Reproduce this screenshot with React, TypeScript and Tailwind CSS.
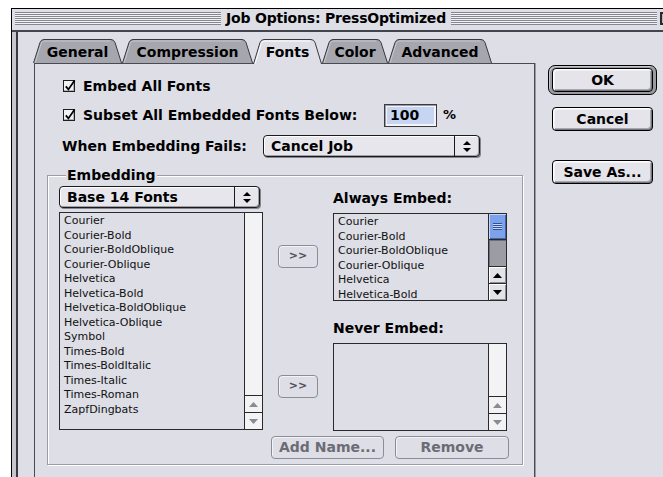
import React from "react";

const SANS = "font-['DejaVu_Sans',sans-serif]";

type TabDef = { label: string; w: number; cls: string; active?: boolean };

const TABS: TabDef[] = [
  { label: "General", w: 89, cls: "w-[89px]" },
  { label: "Compression", w: 131, cls: "w-[131px]" },
  { label: "Fonts", w: 69, cls: "w-[69px]", active: true },
  { label: "Color", w: 66, cls: "w-[66px]" },
  { label: "Advanced", w: 104, cls: "w-[104px]" },
];

const ALL_FONTS = [
  "Courier",
  "Courier-Bold",
  "Courier-BoldOblique",
  "Courier-Oblique",
  "Helvetica",
  "Helvetica-Bold",
  "Helvetica-BoldOblique",
  "Helvetica-Oblique",
  "Symbol",
  "Times-Bold",
  "Times-BoldItalic",
  "Times-Italic",
  "Times-Roman",
  "ZapfDingbats",
];

const ALWAYS = [
  "Courier",
  "Courier-Bold",
  "Courier-BoldOblique",
  "Courier-Oblique",
  "Helvetica",
  "Helvetica-Bold",
];

function Tab({ t }: { t: TabDef }) {
  const w = t.w;
  const h = t.active ? 26 : 25;
  const edge = `M0.5 ${h} L7 4.5 Q8.2 1.5 11 1.5 L${w - 11} 1.5 Q${w - 8.2} 1.5 ${w - 7} 4.5 L${w - 0.5} ${h}`;
  return (
    <div className={`relative h-[25px] ${t.cls} ${t.active ? "z-20" : "z-10"}`}>
      <svg className="absolute left-0 top-0 overflow-visible" width={w} height={h}>
        <path d={edge + " Z"} fill={t.active ? "#dedee6" : "#a6a6ae"} />
        <path
          d={`M2 ${h} L8.3 5.2 Q9.3 3 11.5 3 L${w - 12} 3`}
          fill="none"
          stroke={t.active ? "#ffffff" : "#c6c6ce"}
        />
        <path d={edge} fill="none" stroke="#38383e" />
      </svg>
      <span className="relative flex h-full items-center justify-center pt-[4px] text-[14px] font-bold text-black">
        {t.label}
      </span>
    </div>
  );
}

function Checkbox() {
  return (
    <div className="relative h-[12px] w-[12px] shrink-0 border border-[#1e1e1e] bg-[#f2f2f6] shadow-[inset_-1px_-1px_0_#b0b0b8]">
      <svg className="absolute -left-px -top-[2px] overflow-visible" width="14" height="14" viewBox="0 0 14 14">
        <path d="M2.8 7.4 L5.4 10.4 L11.6 1.6" fill="none" stroke="#000" strokeWidth="1.8" />
      </svg>
    </div>
  );
}

function Tri({ up, color }: { up?: boolean; color: string }) {
  return (
    <svg width="9" height="5" viewBox="0 0 9 5">
      <path d={up ? "M0 5 L4.5 0 L9 5 Z" : "M0 0 L4.5 5 L9 0 Z"} fill={color} />
    </svg>
  );
}

function Popup({ label, cls }: { label: string; cls: string }) {
  return (
    <div
      className={`flex h-[22px] shrink-0 ${cls} rounded-[4px] border border-[#1a1a1a] bg-[#e6e6ec] shadow-[inset_1px_1px_0_#fff,inset_-1px_-1px_0_#a0a0a8,1px_1px_0_#84848c]`}
    >
      <span className="flex-1 pl-[7px] text-[14px] font-bold leading-[20px] text-black">{label}</span>
      <span className="flex w-[25px] flex-col items-center justify-center gap-[2px] border-l border-[#1a1a1a]">
        <svg width="8" height="11" viewBox="0 0 8 11">
          <path d="M0 4 L4 0 L8 4 Z M0 7 L4 11 L8 7 Z" fill="#000" />
        </svg>
      </span>
    </div>
  );
}

const PUSH =
  "flex items-center justify-center rounded-[4px] border border-black bg-[#e4e4ea] text-[14px] font-bold text-black shadow-[inset_1px_1px_0_#fff,inset_2px_2px_0_#f2f2f6,inset_-1px_-1px_0_#74747c,inset_-2px_-2px_0_#a8a8b0]";

const DIM =
  "flex items-center justify-center rounded-[4px] border border-[#8c8c94] bg-[#dedee6] shadow-[inset_1px_1px_0_#f4f4f8]";

function ArrowBox({ up, active }: { up?: boolean; active?: boolean }) {
  return (
    <div
      className={`flex h-[17px] items-center justify-center border-t border-[#2a2a2a] ${
        active ? "bg-[#e2e2e8] shadow-[inset_1px_1px_0_#fff,inset_-1px_-1px_0_#8c8c94]" : "bg-[#f3f3f6]"
      }`}
    >
      <Tri up={up} color={active ? "#000" : "#8a8a92"} />
    </div>
  );
}

function Rows({ items }: { items: string[] }) {
  return (
    <div className="flex-1 overflow-hidden pl-[4px] pt-[1px] text-[11px] leading-[14.5px] text-[#111]">
      {items.map((f) => (
        <div key={f} className="h-[14.5px] whitespace-nowrap">
          {f}
        </div>
      ))}
    </div>
  );
}

function IdleBar() {
  return (
    <div className="flex w-[18px] flex-col border-l border-[#2a2a2a] bg-[#f3f3f6]">
      <div className="flex-1" />
      <ArrowBox up />
      <ArrowBox />
    </div>
  );
}

function LiveBar() {
  return (
    <div className="flex w-[18px] flex-col border-l border-[#2a2a2a]">
      <div className="flex h-[26px] items-center justify-center border-b border-[#2a2a2a] bg-[#7ea2ea] shadow-[inset_1px_1px_0_#c4d6fa,inset_-1px_-1px_0_#3f62b4]">
        <div className="h-[7px] w-[9px] bg-[repeating-linear-gradient(to_bottom,#2e4f9e_0_1px,#c8d8fa_1px_2px)]" />
      </div>
      <div className="flex-1 bg-[#9c9ca4] shadow-[inset_1px_1px_0_#6e6e76]" />
      <ArrowBox up active />
      <ArrowBox active />
    </div>
  );
}

export default function App() {
  return (
    <div className={`h-[477px] w-[663px] overflow-hidden bg-white pl-[11px] pt-[8px] ${SANS}`}>
      <div className="flex h-[520px] w-[680px] flex-col border-l border-t border-black bg-[#dedee6]">
        {/* title bar */}
        <div className="flex h-[23px] shrink-0 items-start border-b-2 border-[#44444c] pl-[3px] pr-[17px] pt-[3px]">
          <div className="h-[13px] flex-1 bg-[repeating-linear-gradient(to_bottom,#86868e_0_1px,#f2f2f6_1px_2px)]" />
          <span className="px-[5px] text-[14px] font-bold leading-[13px] tracking-[-0.2px] text-black">
            Job Options: PressOptimized
          </span>
          <div className="h-[13px] flex-1 bg-[repeating-linear-gradient(to_bottom,#86868e_0_1px,#f2f2f6_1px_2px)]" />
          <div className="ml-[3px] h-[13px] w-[14px] border-2 border-[#2a2a2a] bg-[#b8b8c0]" />
        </div>

        {/* body */}
        <div className="flex flex-1">
          <div className="w-[4px] bg-[#c6c6ce]" />
          <div className="w-[2px] bg-[#3a3a42]" />

          {/* tabs + panel */}
          <div className="flex flex-col pl-[16px] pt-[6px]">
            <div className="relative z-10 -ml-px flex h-[25px]">
              {TABS.map((t) => (
                <Tab key={t.label} t={t} />
              ))}
            </div>

            <div className="flex h-[440px] w-[501px] flex-col border border-[#4a4a52] shadow-[1px_0_0_#9a9aa2]">
              {/* Embed All Fonts */}
              <div className="ml-[28px] mt-[14px] flex h-[16px] items-center">
                <Checkbox />
                <span className="ml-[8px] text-[14px] font-bold leading-[16px] text-black">Embed All Fonts</span>
              </div>

              {/* Subset row */}
              <div className="ml-[28px] mt-[9px] flex h-[24px] items-center">
                <Checkbox />
                <span className="ml-[8px] w-[301px] text-[14px] font-bold leading-[16px] text-black">
                  Subset All Embedded Fonts Below:
                </span>
                <div className="flex h-[23px] w-[53px] items-center border border-[#3a3a42] bg-[#f4f4f8] p-[2px] shadow-[inset_1px_1px_0_#9a9aa2]">
                  <div className="flex h-full w-full items-center bg-[#c6d5f2] pl-[3px] text-[14px] font-bold text-black">
                    100
                  </div>
                </div>
                <span className="ml-[6px] text-[13px] font-bold text-black">%</span>
              </div>

              {/* failure policy */}
              <div className="ml-[27px] mt-[8px] flex h-[22px] items-center">
                <span className="w-[201px] text-[14px] font-bold leading-[16px] text-black">When Embedding Fails:</span>
                <Popup label="Cancel Job" cls="w-[217px]" />
              </div>

              {/* Embedding group */}
              <div className="relative ml-[12px] mt-[18px] w-[476px] border border-[#9c9ca4] shadow-[1px_1px_0_#fff,inset_1px_1px_0_#fff]">
                <span className="absolute -top-[9px] left-[18px] bg-[#dedee6] px-[1px] text-[14px] font-bold leading-[16px] text-black">
                  Embedding
                </span>

                <div className="flex pl-[11px]">
                  {/* source list */}
                  <div className="flex w-[204px] flex-col">
                    <div className="mt-[10px]">
                      <Popup label="Base 14 Fonts" cls="w-[201px]" />
                    </div>
                    <div className="mt-[4px] flex h-[218px] border border-[#2a2a2a]">
                      <Rows items={ALL_FONTS} />
                      <IdleBar />
                    </div>
                  </div>

                  {/* move buttons */}
                  <div className="ml-[15px] flex w-[40px] flex-col">
                    <div className={`${DIM} mt-[69px] h-[23px] text-[11px] font-bold text-[#50505a]`}>&gt;&gt;</div>
                    <div className={`${DIM} mt-[107px] h-[23px] text-[11px] font-bold text-[#50505a]`}>&gt;&gt;</div>
                  </div>

                  {/* target lists */}
                  <div className="ml-[15px] flex w-[174px] flex-col">
                    <div className="mt-[14px] h-[16px] text-[14px] font-bold leading-[16px] text-black">Always Embed:</div>
                    <div className="mt-[7px] flex h-[88px] border border-[#2a2a2a]">
                      <Rows items={ALWAYS} />
                      <LiveBar />
                    </div>
                    <div className="mt-[19px] h-[16px] text-[14px] font-bold leading-[16px] text-black">Never Embed:</div>
                    <div className="mt-[7px] flex h-[88px] border border-[#2a2a2a]">
                      <Rows items={[]} />
                      <IdleBar />
                    </div>
                  </div>
                </div>

                <div className="mb-[5px] mt-[5px] flex justify-end gap-[11px] pr-[13px]">
                  <div className={`${DIM} h-[23px] w-[113px] text-[14px] font-bold text-[#6c6c74]`}>Add Name...</div>
                  <div className={`${DIM} h-[23px] w-[114px] text-[14px] font-bold text-[#6c6c74]`}>Remove</div>
                </div>
              </div>
            </div>
          </div>

          {/* dialog buttons */}
          <div className="ml-[13px] flex w-[109px] flex-col pt-[33px]">
            <div className="rounded-[7px] border border-black bg-[#9a9aa2] px-[3px] py-[2px] shadow-[inset_1px_1px_0_#c8c8d0]">
              <div className={`${PUSH} h-[24px]`}>OK</div>
            </div>
            <div className={`${PUSH} ml-[4px] mt-[12px] h-[24px] w-[101px]`}>Cancel</div>
            <div className={`${PUSH} ml-[4px] mt-[29px] h-[24px] w-[101px]`}>Save As...</div>
          </div>
        </div>
      </div>
    </div>
  );
}
